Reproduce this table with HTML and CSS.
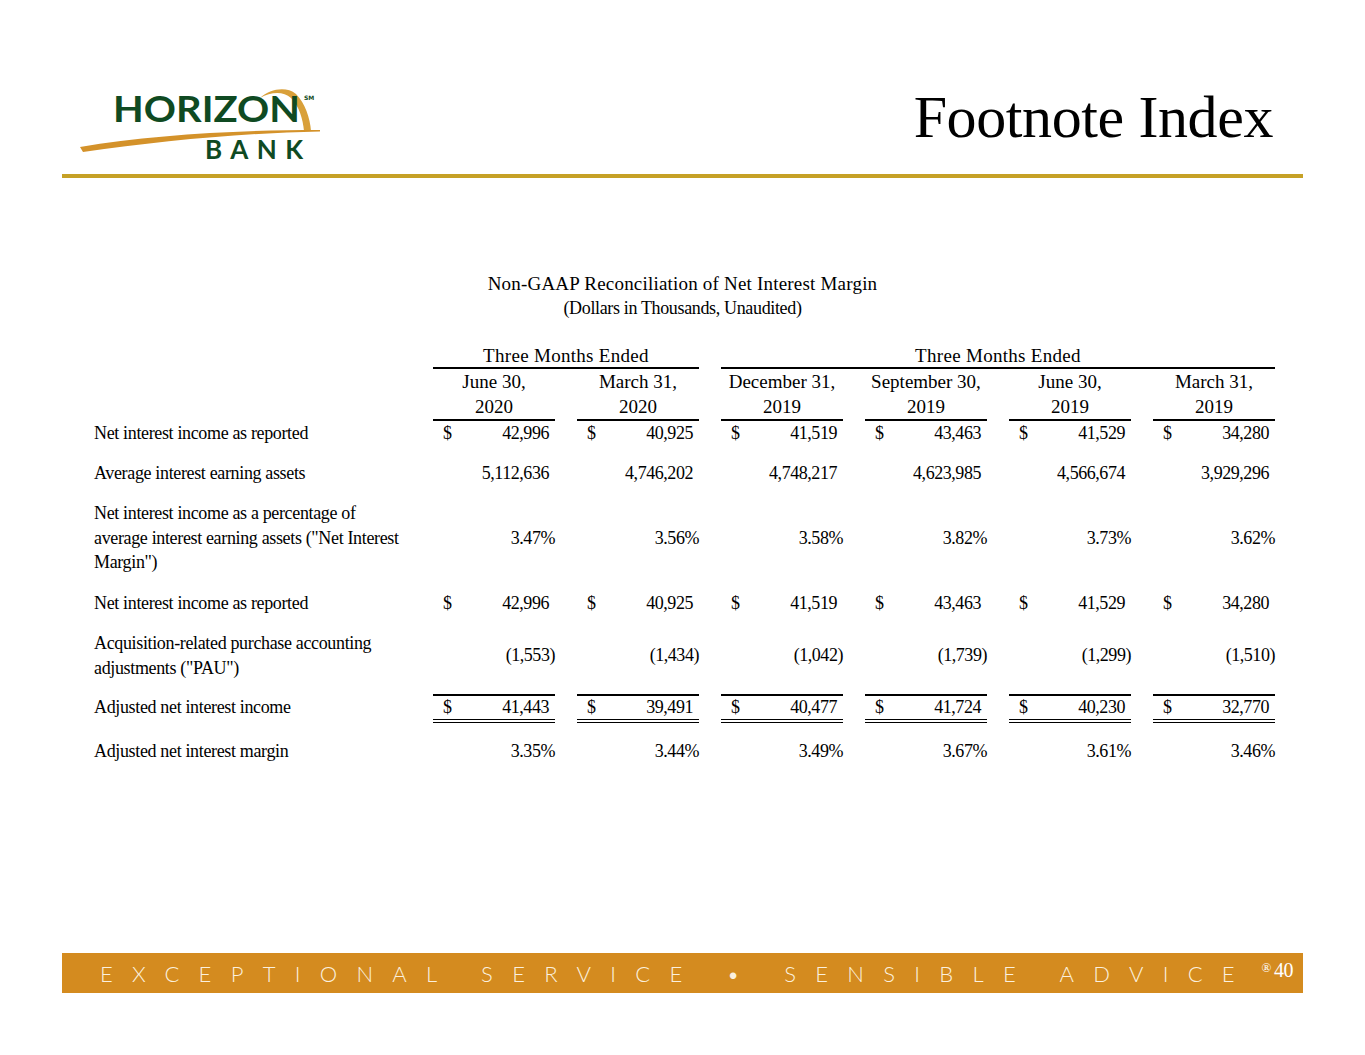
FILE: index.html
```html
<!DOCTYPE html>
<html lang="en">
<head>
<meta charset="utf-8">
<title>Footnote Index</title>
<link rel="stylesheet" href="styles.css">
</head>
<body>
<div class="page">
  <header class="header">
    <svg class="logo" width="245" height="80" viewBox="0 0 245 80" aria-label="Horizon Bank">
      <path class="arc" d="M180,13 C190,4 206,1 216,9 C225,18 230,33 231,46 L224,46 C223,34 219,21 211,13 C203,6 191,7 180,13 Z"/>
      <text class="logo-main" x="33" y="37" textLength="187" lengthAdjust="spacingAndGlyphs">HORIZON</text>
      <text class="logo-sm" x="224" y="15">SM</text>
      <path class="swoosh" d="M0,62 C70,50 160,45 240,45 L240,46.5 C160,48 80,56 3,67 Z"/>
      <text class="logo-bank" x="125" y="74" textLength="98" lengthAdjust="spacing">BANK</text>
    </svg>
    <h1 class="title">Footnote Index</h1>
  </header>

  <main class="content">
    <div class="caption">
      <div class="caption-main">Non-GAAP Reconciliation of Net Interest Margin</div>
      <div class="caption-sub">(Dollars in Thousands, Unaudited)</div>
    </div>

    <div class="table">
      <div class="row group-row">
        <div class="cell label"></div>
        <div class="cell group g1">Three Months Ended</div>
        <div class="cell group g2">Three Months Ended</div>
      </div>
      <div class="row head-row">
        <div class="cell label"></div>
        <div class="cell head">June 30,<br>2020</div>
        <div class="cell head">March 31,<br>2020</div>
        <div class="cell head">December 31,<br>2019</div>
        <div class="cell head">September 30,<br>2019</div>
        <div class="cell head">June 30,<br>2019</div>
        <div class="cell head">March 31,<br>2019</div>
      </div>

      <div class="row r-first">
        <div class="cell label">Net interest income as reported</div>
        <div class="cell val"><span>$</span><span>42,996</span></div>
        <div class="cell val"><span>$</span><span>40,925</span></div>
        <div class="cell val"><span>$</span><span>41,519</span></div>
        <div class="cell val"><span>$</span><span>43,463</span></div>
        <div class="cell val"><span>$</span><span>41,529</span></div>
        <div class="cell val"><span>$</span><span>34,280</span></div>
      </div>

      <div class="row">
        <div class="cell label">Average interest earning assets</div>
        <div class="cell val"><span></span><span>5,112,636</span></div>
        <div class="cell val"><span></span><span>4,746,202</span></div>
        <div class="cell val"><span></span><span>4,748,217</span></div>
        <div class="cell val"><span></span><span>4,623,985</span></div>
        <div class="cell val"><span></span><span>4,566,674</span></div>
        <div class="cell val"><span></span><span>3,929,296</span></div>
      </div>

      <div class="row">
        <div class="cell label">Net interest income as a percentage of<br>average interest earning assets ("Net Interest<br>Margin")</div>
        <div class="cell val pct"><span></span><span>3.47%</span></div>
        <div class="cell val pct"><span></span><span>3.56%</span></div>
        <div class="cell val pct"><span></span><span>3.58%</span></div>
        <div class="cell val pct"><span></span><span>3.82%</span></div>
        <div class="cell val pct"><span></span><span>3.73%</span></div>
        <div class="cell val pct"><span></span><span>3.62%</span></div>
      </div>

      <div class="row">
        <div class="cell label">Net interest income as reported</div>
        <div class="cell val"><span>$</span><span>42,996</span></div>
        <div class="cell val"><span>$</span><span>40,925</span></div>
        <div class="cell val"><span>$</span><span>41,519</span></div>
        <div class="cell val"><span>$</span><span>43,463</span></div>
        <div class="cell val"><span>$</span><span>41,529</span></div>
        <div class="cell val"><span>$</span><span>34,280</span></div>
      </div>

      <div class="row r-pau">
        <div class="cell label">Acquisition-related purchase accounting<br>adjustments ("PAU")</div>
        <div class="cell val neg"><span></span><span>(1,553)</span></div>
        <div class="cell val neg"><span></span><span>(1,434)</span></div>
        <div class="cell val neg"><span></span><span>(1,042)</span></div>
        <div class="cell val neg"><span></span><span>(1,739)</span></div>
        <div class="cell val neg"><span></span><span>(1,299)</span></div>
        <div class="cell val neg"><span></span><span>(1,510)</span></div>
      </div>

      <div class="row r-total">
        <div class="cell label">Adjusted net interest income</div>
        <div class="cell val"><span>$</span><span>41,443</span></div>
        <div class="cell val"><span>$</span><span>39,491</span></div>
        <div class="cell val"><span>$</span><span>40,477</span></div>
        <div class="cell val"><span>$</span><span>41,724</span></div>
        <div class="cell val"><span>$</span><span>40,230</span></div>
        <div class="cell val"><span>$</span><span>32,770</span></div>
      </div>

      <div class="row r-last">
        <div class="cell label">Adjusted net interest margin</div>
        <div class="cell val pct"><span></span><span>3.35%</span></div>
        <div class="cell val pct"><span></span><span>3.44%</span></div>
        <div class="cell val pct"><span></span><span>3.49%</span></div>
        <div class="cell val pct"><span></span><span>3.67%</span></div>
        <div class="cell val pct"><span></span><span>3.61%</span></div>
        <div class="cell val pct"><span></span><span>3.46%</span></div>
      </div>
    </div>
  </main>

  <footer class="footer">
    <div class="tagline">EXCEPTIONAL SERVICE &bull; SENSIBLE ADVICE</div>
    <div class="page-no"><sup class="reg">&reg;</sup>40</div>
  </footer>
</div>
</body>
</html>
```

FILE: styles.css
```css
html, body {
  margin: 0;
  padding: 0;
  background: #ffffff;
}

body {
  font-family: "Liberation Serif", "Times New Roman", serif;
  color: #000;
}

.page {
  width: 1241px;
  height: 1055px;
  margin: 0 0 0 62px;
  display: flex;
  flex-direction: column;
}

/* ---------- header ---------- */
.header {
  height: 178px;
  box-sizing: border-box;
  padding: 85px 30px 0 18px;
  border-bottom: 4px solid #c6a126;
  display: flex;
  justify-content: space-between;
  align-items: flex-start;
  flex: none;
}

.logo {
  display: block;
}

.logo-main {
  font-family: "Lato", "DejaVu Sans", sans-serif;
  font-weight: 700;
  font-size: 37px;
  fill: #0f4a22;
}

.logo-sm {
  font-family: "DejaVu Sans", sans-serif;
  font-size: 6px;
  font-weight: 700;
  fill: #0f4a22;
}

.logo-bank {
  font-family: "Lato", "DejaVu Sans", sans-serif;
  font-weight: 700;
  font-size: 26px;
  fill: #0f4a22;
}

.swoosh {
  fill: #d4922a;
}

.arc {
  fill: #d9a03a;
}

.title {
  margin: 2px 0 0 0;
  font-weight: 400;
  font-size: 60px;
  line-height: 60px;
  letter-spacing: -0.4px;
}

/* ---------- content ---------- */
.content {
  flex: none;
}

.caption {
  margin-top: 94px;
  text-align: center;
  line-height: 24px;
}

.caption-main {
  font-size: 19px;
  letter-spacing: 0.2px;
}

.caption-sub {
  font-size: 18px;
  letter-spacing: -0.35px;
}

.table {
  margin-top: 25px;
  margin-left: 32px;
  font-size: 18px;
}

.row {
  display: grid;
  grid-template-columns: 317px repeat(6, 122px);
  column-gap: 22px;
}

.cell {
  line-height: 24.5px;
  padding: 8px 0;
}

.label {
  letter-spacing: -0.35px;
  display: flex;
  align-items: center;
}

.group-row .cell {
  padding: 0;
  line-height: 22px;
}

.group {
  text-align: center;
  border-bottom: 2px solid #000;
  font-size: 19px;
  letter-spacing: 0.3px;
}

.g1 {
  grid-column: 2 / span 2;
}

.g2 {
  grid-column: 4 / span 4;
}

.head-row .cell {
  padding: 0;
  line-height: 25px;
}

.head {
  text-align: center;
  border-bottom: 2px solid #000;
  font-size: 19px;
  letter-spacing: 0;
}

.val {
  display: flex;
  justify-content: space-between;
  align-items: center;
  padding-left: 10px;
  padding-right: 6px;
  letter-spacing: -0.45px;
}

.val.pct,
.val.neg {
  padding-right: 0;
}

.r-first .cell {
  padding-top: 0;
  padding-bottom: 7px;
}

.r-pau .cell {
  padding-bottom: 14px;
}

.r-total .cell {
  padding: 0;
  line-height: 23px;
  border-top: 2px solid transparent;
  border-bottom: 4px double transparent;
}

.r-total .val {
  padding-left: 10px;
  padding-right: 6px;
  border-top-color: #000;
  border-bottom-color: #000;
}

.r-last .cell {
  padding-top: 16px;
}

/* ---------- footer ---------- */
.footer {
  margin-top: auto;
  margin-bottom: 62px;
  height: 40px;
  background: #d48b1f;
  display: flex;
  align-items: center;
  justify-content: space-between;
  padding: 0 10px 0 38px;
  flex: none;
}

.tagline {
  font-family: "Lato", "DejaVu Sans", sans-serif;
  font-weight: 300;
  font-size: 22px;
  letter-spacing: 19.3px;
  color: #fbf0de;
  white-space: nowrap;
}

.page-no {
  font-family: "Liberation Serif", serif;
  font-size: 20px;
  color: #ffffff;
  letter-spacing: -0.5px;
  margin-top: -6px;
}

.reg {
  font-size: 13px;
  margin-right: 3px;
  vertical-align: 5px;
}
```
